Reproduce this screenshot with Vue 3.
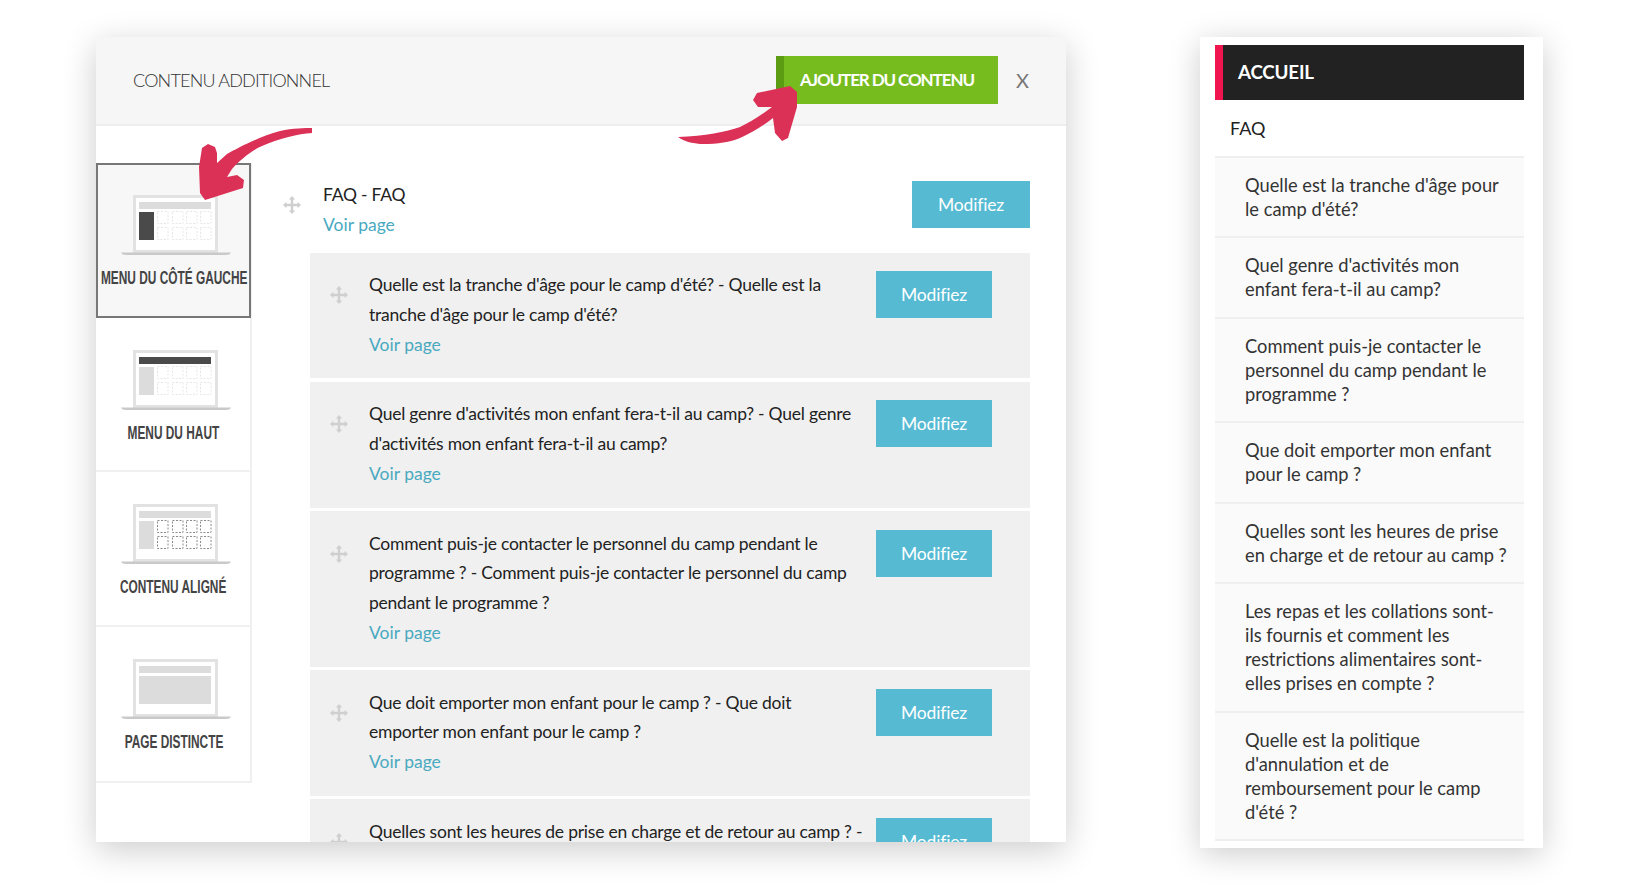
<script setup>
const layouts = [
  { label: 'Menu du côté gauche', kind: 'side', active: true },
  { label: 'Menu du haut', kind: 'top' },
  { label: 'Contenu aligné', kind: 'grid' },
  { label: 'Page distincte', kind: 'page' }
]
const gridCells = [37, 52, 66, 80].flatMap((x) => [18, 34].map((y) => ({ x, y })))
const rows = [
  "Quelle est la tranche d'âge pour le camp d'été? - Quelle est la tranche d'âge pour le camp d'été?",
  "Quel genre d'activités mon enfant fera-t-il au camp? - Quel genre d'activités mon enfant fera-t-il au camp?",
  'Comment puis-je contacter le personnel du camp pendant le programme\u202f? - Comment puis-je contacter le personnel du camp pendant le programme\u202f?',
  'Que doit emporter mon enfant pour le camp\u202f? - Que doit emporter mon enfant pour le camp\u202f?',
  'Quelles sont les heures de prise en charge et de retour au camp\u202f? - Quelles sont les heures de prise en charge et de retour au camp\u202f?'
]
const menu = [
  "Quelle est la tranche d'âge pour le camp d'été?",
  "Quel genre d'activités mon enfant fera-t-il au camp?",
  'Comment puis-je contacter le personnel du camp pendant le programme\u202f?',
  'Que doit emporter mon enfant pour le camp\u202f?',
  'Quelles sont les heures de prise en charge et de retour au camp\u202f?',
  'Les repas et les collations sont-ils fournis et comment les restrictions alimentaires sont-elles prises en compte\u202f?',
  "Quelle est la politique d'annulation et de remboursement pour le camp d'été\u202f?"
]
const movePath = 'M9 0 L12.2 3.4 H10.2 V7.8 H14.6 V5.8 L18 9 L14.6 12.2 V10.2 H10.2 V14.6 H12.2 L9 18 L5.8 14.6 H7.8 V10.2 H3.4 V12.2 L0 9 L3.4 5.8 V7.8 H7.8 V3.4 H5.8 Z'
</script>

<template>
  <div class="stage">
    <section class="panel">
      <header class="head">
        <span class="head-title">CONTENU ADDITIONNEL</span>
        <div class="head-actions">
          <button class="add">AJOUTER DU CONTENU</button>
          <span class="close">X</span>
        </div>
      </header>
      <div class="body">
        <nav class="side">
          <div v-for="l in layouts" :key="l.label" class="layout" :class="{ active: l.active }">
            <svg class="laptop" width="112" height="62" viewBox="0 0 112 62">
              <rect x="14.5" y="3.5" width="82" height="55" fill="#fff" stroke="#e2e2e2" stroke-width="3" />
              <rect x="19" y="9" width="72" height="7" :fill="l.kind === 'top' ? '#4a4a4a' : '#dcdcdc'" />
              <template v-if="l.kind === 'page'">
                <rect x="19" y="19" width="72" height="28" fill="#dcdcdc" />
              </template>
              <template v-else>
                <rect x="19" y="19" width="15" height="28" :fill="l.kind === 'side' ? '#4a4a4a' : '#dcdcdc'" />
                <rect
                  v-for="c in gridCells"
                  :key="c.x + '-' + c.y"
                  :x="c.x + 0.5"
                  :y="c.y + 0.5"
                  width="10.5"
                  height="12"
                  fill="none"
                  :stroke="l.kind === 'grid' ? '#8a8a8a' : '#e6e6e6'"
                  stroke-width="1"
                  stroke-dasharray="2 1.5"
                />
              </template>
              <path d="M1 59.5 H111 Q110 62 106 62 H6 Q2 62 1 59.5 Z" fill="#c9c9c9" />
            </svg>
            <span class="layout-label">{{ l.label }}</span>
          </div>
        </nav>
        <div class="content">
          <div class="top-item">
            <svg class="move" width="18" height="18" viewBox="0 0 18 18"><path :d="movePath" /></svg>
            <div class="top-text">
              <div>FAQ - FAQ</div>
              <a class="link">Voir page</a>
            </div>
            <button class="edit wide">Modifiez</button>
          </div>
          <div v-for="r in rows" :key="r" class="row">
            <svg class="move" width="18" height="18" viewBox="0 0 18 18"><path :d="movePath" /></svg>
            <div class="row-text">
              <div>{{ r }}</div>
              <a class="link">Voir page</a>
            </div>
            <button class="edit">Modifiez</button>
          </div>
        </div>
      </div>
    </section>

    <aside class="menu">
      <div class="menu-home">ACCUEIL</div>
      <div class="menu-faq">FAQ</div>
      <div v-for="m in menu" :key="m" class="menu-item">{{ m }}</div>
    </aside>

    <svg class="arrows" width="1640" height="887" viewBox="0 0 1640 887">
      <path d="M312 128 C 305 128 293 128 280 131 C 258 137 238 148 227 154 L217 163 L217 153 L215 147 L208 144 L202 148 L199 167 L200 193 L205 200 L243 188 L244 180 L237 175 L227 177 L232 169 C 240 160 252 150 262 146 C 280 138 298 134 312 133 Z" />
      <path d="M678 137 C 685 142 695 144 703 144 C 718 144 730 142 740 138 C 752 133 764 125 773 118 L775 133 L782 141 L788 138 L797 107 L797 92 L790 86 L757 93 L753 100 L758 107 L772 107 C 760 116 750 122 740 127 C 726 132 705 136 678 137 Z" />
    </svg>
  </div>
</template>

<style scoped>
.stage {
  position: relative;
  display: flex;
  align-items: flex-start;
  gap: 134px;
  box-sizing: border-box;
  width: 1640px;
  height: 887px;
  padding: 37px 0 0 96px;
  overflow: hidden;
  background: #fff;
  font-family: Lato, "Open Sans", sans-serif;
  font-size: 17.5px;
  color: #333;
}
.panel {
  display: flex;
  flex-direction: column;
  flex: none;
  width: 970px;
  height: 805px;
  overflow: hidden;
  background: #fff;
  box-shadow: 0 8px 32px rgba(0, 0, 0, 0.2);
}
.head {
  display: flex;
  flex: none;
  align-items: center;
  justify-content: space-between;
  box-sizing: border-box;
  height: 89px;
  padding: 0 37px 2px 37px;
  background: #f6f6f6;
  border-bottom: 2px solid #eeeeee;
}
.head-title {
  font-size: 18px;
  font-weight: 300;
  letter-spacing: -0.8px;
  color: #333;
}
.head-actions {
  display: flex;
  align-items: center;
  gap: 18px;
}
.add {
  box-sizing: border-box;
  width: 222px;
  height: 48px;
  padding: 0 12px 0 16px;
  border: 0;
  border-left: 8px solid #5b9c12;
  background: #77bc1f;
  font: 700 17px Lato, sans-serif;
  letter-spacing: -1.1px;
  text-align: left;
  color: #fff;
}
.close {
  font-size: 20px;
  color: #777;
}
.body {
  display: flex;
  flex: 1;
  min-height: 0;
}
.side {
  flex: none;
  align-self: flex-start;
  box-sizing: border-box;
  width: 156px;
  margin-top: 37px;
  border-right: 2px solid #f0f0f0;
  border-bottom: 2px solid #f0f0f0;
}
.layout {
  display: flex;
  flex-direction: column;
  align-items: center;
  box-sizing: border-box;
  height: 154.5px;
  padding-top: 30px;
  border-bottom: 2px solid #f0f0f0;
}
.layout:last-child {
  border-bottom: 0;
}
.layout.active {
  width: 155px;
  padding-top: 30px;
  border: 2px solid #777;
  background: #f7f7f7;
}
.layout.active .laptop {
  margin-top: -2px;
}
.laptop {
  flex: none;
  margin-left: 5px;
}
.layout-label {
  display: inline-block;
  margin-top: 11px;
  margin-left: 1px;
  font-family: "Liberation Sans", sans-serif;
  font-size: 19px;
  line-height: 24px;
  font-weight: 700;
  text-transform: uppercase;
  white-space: nowrap;
  color: #444;
  transform: scaleX(0.625);
}
.content {
  flex: 1;
  min-width: 0;
  padding: 54px 36px 0 31px;
}
.top-item {
  display: flex;
  align-items: flex-start;
  padding-bottom: 13px;
  line-height: 29.75px;
  letter-spacing: -0.23px;
  color: #222;
}
.move {
  flex: none;
  fill: #cfcfcf;
}
.top-item .move {
  margin-top: 16px;
}
.top-text {
  flex: 1;
  margin-left: 22px;
}
.link {
  letter-spacing: 0;
  color: #49a9bf;
}
.edit {
  flex: none;
  height: 47px;
  border: 0;
  background: #56bad3;
  font: 400 17.5px Lato, sans-serif;
  letter-spacing: -0.2px;
  color: #fff;
}
.edit.wide {
  width: 118px;
  margin-top: 1px;
}
.row {
  display: flex;
  align-items: flex-start;
  box-sizing: border-box;
  margin-bottom: 3.5px;
  margin-left: 27px;
  padding: 17.5px 38px 19px 20px;
  background: #f0f0f0;
  line-height: 29.75px;
  letter-spacing: -0.23px;
  color: #222;
}
.row .move {
  margin-top: 16px;
}
.row-text {
  flex: 1;
  min-width: 0;
  margin: 0 12px 0 21px;
}
.row .edit {
  width: 116px;
  margin-top: 1px;
}
.menu {
  flex: none;
  box-sizing: border-box;
  width: 343px;
  height: 811px;
  padding: 8px 19px 0 15px;
  background: #fff;
  box-shadow: 0 6px 30px rgba(0, 0, 0, 0.2);
}
.menu-home {
  height: 55px;
  padding-left: 15px;
  border-left: 8px solid #f0144f;
  background: #222;
  font-size: 18.8px;
  font-weight: 700;
  line-height: 53px;
  letter-spacing: -0.2px;
  color: #fff;
}
.menu-faq {
  box-sizing: border-box;
  height: 57.5px;
  padding-left: 15px;
  border-bottom: 2px solid #efefef;
  font-size: 18px;
  line-height: 56px;
  color: #222;
}
.menu-item {
  padding: 15px 14px 15.5px 30px;
  border-bottom: 2px solid #efefef;
  background: #fafafa;
  font-size: 18.3px;
  line-height: 24px;
  color: #333;
}
.arrows {
  position: absolute;
  left: 0;
  top: 0;
  fill: #dc3157;
  pointer-events: none;
}
</style>
